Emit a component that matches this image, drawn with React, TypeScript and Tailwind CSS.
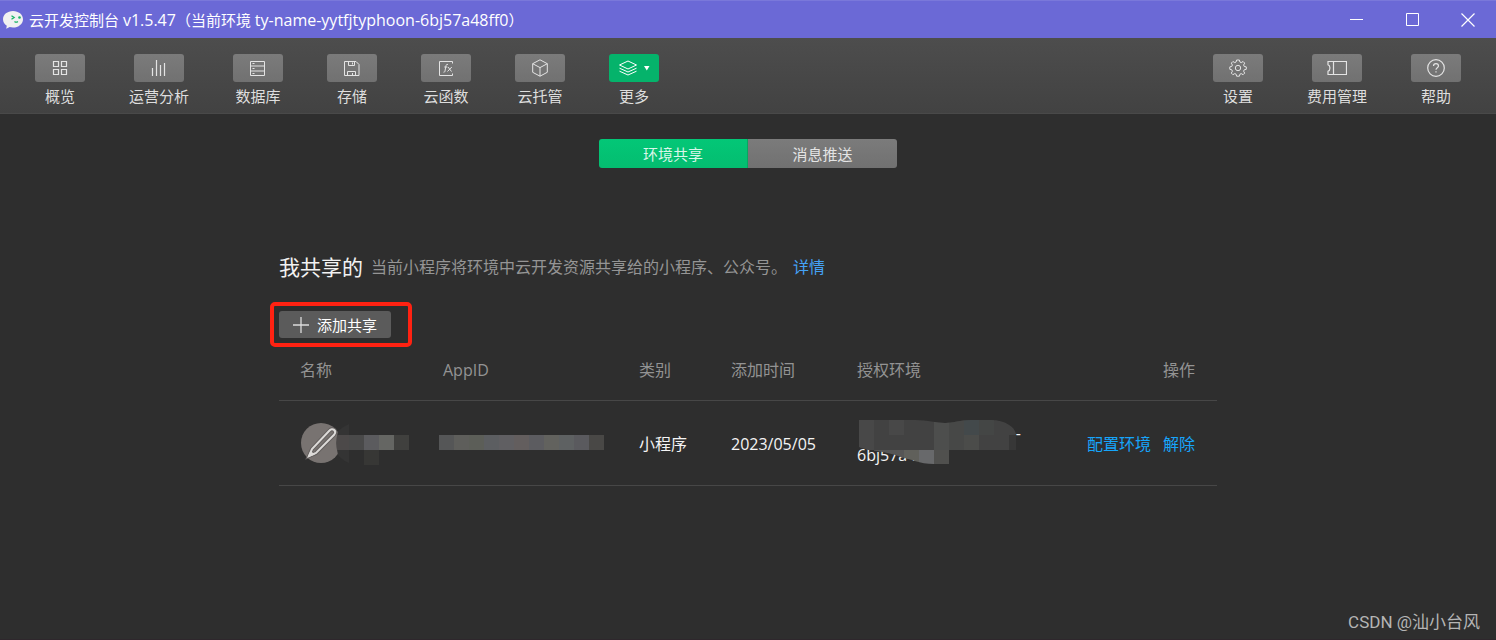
import type { ReactNode } from "react";

type ToolItem = { label: string; icon: ReactNode; active?: boolean };

const stroke = { fill: "none", stroke: "#e4e4e4", strokeWidth: 1 } as const;

const GridIcon = () => (
  <svg width="16" height="16" viewBox="0 0 16 16" {...stroke} aria-hidden="true">
    <path d="M1.5 1.5h5v5h-5zM9.5 1.5h5v5h-5zM1.5 9.5h5v5h-5zM9.5 9.5h5v5h-5z" strokeWidth="1.2" />
  </svg>
);
const BarsIcon = () => (
  <svg width="16" height="16" viewBox="0 0 16 16" {...stroke} aria-hidden="true">
    <path d="M1.5 8v8M5.500 0v16M9.500 5v11M13.500 3v13" strokeWidth="1.2" />
  </svg>
);
const DatabaseIcon = () => (
  <svg width="16" height="16" viewBox="0 0 16 16" {...stroke} aria-hidden="true">
    <path d="M.5 1.5h14v14H.5zM.5 6h14M.5 11h14M2.500 3.500h2M2.500 8.500h2M2.500 13.500h2" />
  </svg>
);
const SaveIcon = () => (
  <svg width="16" height="16" viewBox="0 0 16 16" {...stroke} aria-hidden="true">
    <path d="M.5 1.5h11.500l3 3v11H.5zM4.500 1.500v4h6v-4M8.500 2.500v2M3.500 15.500v-4h8v4M8.500 13v2" />
  </svg>
);
const FunctionIcon = () => (
  <svg width="16" height="16" viewBox="0 0 16 16" {...stroke} aria-hidden="true">
    <path d="M14.500 3.500v-2h-13v14h13v-2" />
    <path d="M10 4.500c-1.500-.5-2 .5-2.200 2L7 11c-.2 1-.7 1.400-1.500 1.200M6.300 7h3M10 7l3.500 4.500M13.800 7l-4.300 4.500" />
  </svg>
);
const CubeIcon = () => (
  <svg width="18" height="18" viewBox="0 0 18 18" {...stroke} strokeLinejoin="round" aria-hidden="true">
    <path d="M9 .8l7.300 3.900v8.600L9 17.200l-7.300-3.900V4.700zM1.700 4.700L9 8.600l7.300-3.900M9 8.600v8.600" />
  </svg>
);
const LayersIcon = () => (
  <svg width="32" height="16" viewBox="0 0 32 16" fill="none" stroke="#fff" aria-hidden="true">
    <path d="M10 1l8.500 4L10 9 1.500 5zM1.500 8.200L10 12l8.500-3.800M1.500 11.200L10 15l8.500-3.800" />
    <path d="M26 6h5.500l-2.700 4.500z" fill="#fff" stroke="none" />
  </svg>
);
const GearIcon = () => (
  <svg width="18" height="18" viewBox="0 0 18 18" {...stroke} strokeLinejoin="round" aria-hidden="true">
    <path d="M7.600 1h2.800l.5 2 1.300.6 1.900-1.100 1.600 1.600-1.100 1.900.6 1.400 2.100.5v2.400l-2.100.5-.6 1.400 1.100 1.900-1.600 1.600-1.900-1.100-1.300.6-.5 2H7.600l-.5-2-1.300-.6-1.900 1.100-1.600-1.600 1.100-1.900-.6-1.400-2-.5V7.900l2-.5.6-1.400-1.100-1.900 1.600-1.600 1.900 1.100 1.300-.6z" />
    <circle cx="9" cy="9" r="2.700" />
  </svg>
);
const TicketIcon = () => (
  <svg width="20" height="16" viewBox="0 0 20 16" {...stroke} aria-hidden="true">
    <path d="M1 1.500h18.500v13H1v-3.200c2.600-.8 2.600-5.800 0-6.600zM6.500 1.500v13" strokeWidth="1.200" />
  </svg>
);
const HelpIcon = () => (
  <svg width="18" height="18" viewBox="0 0 18 18" {...stroke} aria-hidden="true">
    <circle cx="9" cy="9" r="8.300" strokeWidth="1.200" />
    <path d="M6.500 7c0-3.300 5-3.300 5 0 0 1.700-2.500 1.800-2.500 3.800M9 12.200v1.300" strokeWidth="1.200" />
  </svg>
);

const leftItems: ToolItem[] = [
  { label: "概览", icon: <GridIcon /> },
  { label: "运营分析", icon: <BarsIcon /> },
  { label: "数据库", icon: <DatabaseIcon /> },
  { label: "存储", icon: <SaveIcon /> },
  { label: "云函数", icon: <FunctionIcon /> },
  { label: "云托管", icon: <CubeIcon /> },
  { label: "更多", icon: <LayersIcon />, active: true },
];
const rightItems: ToolItem[] = [
  { label: "设置", icon: <GearIcon /> },
  { label: "费用管理", icon: <TicketIcon /> },
  { label: "帮助", icon: <HelpIcon /> },
];

function ToolButton({ label, icon, active }: ToolItem) {
  return (
    <button type="button" className="flex flex-col items-center gap-[3px] text-[15px] leading-[22px] text-[#dedede]">
      <span
        className={
          active
            ? "flex h-7 w-[50px] items-center justify-center rounded-[3px] bg-[#05b36b]"
            : "flex h-7 w-[50px] items-center justify-center rounded-[3px] bg-linear-to-b from-[#7b7b7b] to-[#717171]"
        }
      >
        {icon}
      </span>
      {label}
    </button>
  );
}

function TitleBar() {
  return (
    <header className="flex h-[38px] items-center justify-between border-t border-[#7a78da] bg-[#6b69d6] pl-[3px] text-white">
      <div className="flex items-center gap-[6px]">
        <svg width="20" height="18" viewBox="0 0 20 18" aria-hidden="true">
          <path d="M10 0c5.600 0 10 3.600 10 8.200s-4.400 8.300-10 8.300c-1.200 0-2.300-.2-3.300-.5L3.200 17.800l.6-3C1.500 13.300 0 11 0 8.200 0 3.600 4.400 0 10 0z" fill="#f1f1f1" />
          <path d="M8.500 4.700l2.700 1.800-2.700 1.800M11.500 10.500c1 .8 2.400.8 3.400 0" fill="none" stroke="#18b566" strokeWidth="1.300" />
          <circle cx="16.500" cy="6.500" r="1.300" fill="#18b566" />
        </svg>
        <h1 className="text-[15px] leading-[22px] whitespace-nowrap">
          云开发控制台 <span className="text-base leading-[22px]">v1.5.47</span>（当前环境{" "}
          <span className="text-base leading-[22px]">ty-name-yytfjtyphoon-6bj57a48ff0</span>）
        </h1>
      </div>
      <div className="flex h-full">
        <button type="button" aria-label="最小化" className="flex w-14 items-center justify-center">
          <svg width="13" height="13" viewBox="0 0 13 13" stroke="#fff"><path d="M0 6.500h13" /></svg>
        </button>
        <button type="button" aria-label="最大化" className="flex w-14 items-center justify-center">
          <svg width="13" height="13" viewBox="0 0 13 13" stroke="#fff" fill="none"><path d="M.5.5h12v12H.5z" /></svg>
        </button>
        <button type="button" aria-label="关闭" className="flex w-14 items-center justify-center">
          <svg width="14" height="14" viewBox="0 0 14 14" stroke="#fff" strokeWidth="1.200"><path d="M.5.500l13 13M13.500.5l-13 13" /></svg>
        </button>
      </div>
    </header>
  );
}

const appIdBlocks = ["#555657", "#5e5e5b", "#5c5e58", "#5c5e61", "#605f62", "#635e5e", "#5c5c60", "#62625e", "#5e6162", "#5a5a5e", "#494846"];

function NameCell() {
  return (
    <svg width="108" height="44" viewBox="0 0 108 44" role="img" aria-label="小程序头像">
      <circle cx="20" cy="22" r="20" fill="#787371" />
      <path d="M37 10Q41 6 48 3v39Q41 39 37 34 34 22 37 10z" fill="#343434" />
      <path d="M8 35l3-7L28.500 9.500c3-3.500 7.500.5 4.800 4L15 32z" fill="none" stroke="#625e5d" strokeWidth="4" />
      <path d="M8 35l3-7L28.500 9.500c3-3.500 7.500.5 4.800 4L15 32z" fill="none" stroke="#dcdad8" strokeWidth="2" />
      <path d="M6.500 36.500l3-6.500 4.500 3.500z" fill="#dcdad8" />
      <path d="M36 14h12v15H36q-1-7 0-15z" fill="#4c4949" />
      <path d="M48 14h15v15H48z" fill="#494949" />
      <path d="M63 29h15v15H63z" fill="#373735" />
      <path d="M63 14h15v15H63z" fill="#5b5b5e" />
      <path d="M78 14h15v15H78z" fill="#656663" />
      <path d="M93 14h15v15H93z" fill="#40403e" />
    </svg>
  );
}

function EnvMosaic() {
  return (
    <svg className="absolute top-[-2px] left-0.5" width="158" height="44" viewBox="0 0 158 44" aria-hidden="true">
      <clipPath id="smear">
        <path d="M0 0h56c14 0 20 3 30 3S100 0 112 0h20c14 0 24 7 25 14v16H90v14H75C60 44 52 39 42 37 24 30 12 32 0 27z" />
      </clipPath>
      <g clipPath="url(#smear)">
        <path d="M0 0h158v30H0z" fill="#424242" />
        <path d="M0 0h15v30H0zM30 0h15v15H30z" fill="#484848" />
        <path d="M75 0h15v30H75z" fill="#4d4e4d" />
        <path d="M90 0h15v30H90z" fill="#474847" />
        <path d="M105 0h15v15h-15z" fill="#43494b" />
        <path d="M105 15h15v15h-15z" fill="#4b4c4a" />
        <path d="M120 0h15v15h-15z" fill="#444645" />
        <path d="M150 15h8v15h-8z" fill="#373737" />
        <path d="M15 30h30v14H15z" fill="#565656" />
        <path d="M45 30h15v14H45z" fill="#60605b" />
        <path d="M60 30h15v14H60z" fill="#68696b" />
        <path d="M75 30h15v14H75z" fill="#50504e" />
      </g>
    </svg>
  );
}

export default function App() {
  return (
    <div className="flex min-h-screen flex-col border-b border-[#2e272c] bg-[#2e2e2e] font-['Open_Sans','Noto_Sans_CJK_SC',sans-serif]">
      <TitleBar />
      <nav className="flex justify-between border-b border-[#494949] bg-linear-to-b from-[#4d4d4d] to-[#424242] px-[35px] pt-4 pb-[6px]">
        <div className="flex gap-11">
          {leftItems.map((item) => <ToolButton key={item.label} {...item} />)}
        </div>
        <div className="flex gap-11">
          {rightItems.map((item) => <ToolButton key={item.label} {...item} />)}
        </div>
      </nav>

      <main className="flex grow flex-col items-center pt-[25px]">
        <div role="tablist" className="grid h-[29px] w-[298px] grid-cols-2 overflow-hidden rounded-[3px] text-[15px] leading-[22px]">
          <button type="button" role="tab" aria-selected="true" className="border-r border-[#06a761] bg-linear-to-b from-[#03c777] to-[#04bd70] text-[#d9f6e9]">环境共享</button>
          <button type="button" role="tab" aria-selected="false" className="bg-linear-to-b from-[#7b7b7b] to-[#717171] text-[#e4e4e4]">消息推送</button>
        </div>

        <section className="mt-[84px] w-full max-w-[938px]">
          <div className="flex items-center gap-2 text-base leading-[30px] text-[#959595]">
            <h2 className="text-[21px] leading-[30px] text-[#f2f2f2]">我共享的</h2>
            <p>
              当前小程序将环境中云开发资源共享给的小程序、公众号。
              <a href="#details" className="ml-1.5 text-[#45a2f5]">详情</a>
            </p>
          </div>

          <div className="mt-5 -ml-[9px] flex w-[142px] rounded-[5px] border-4 border-[#ff2212] p-[5px]">
            <button type="button" className="flex h-[27px] w-28 items-center justify-center gap-2 rounded-[3px] bg-[#5b5b5b] text-[15px] leading-[22px] text-white">
              <svg width="16" height="16" viewBox="0 0 16 16" stroke="#dcdcdc" strokeWidth="1.300" aria-hidden="true"><path d="M8 0v16M0 8h16" /></svg>
              添加共享
            </button>
          </div>

          <table className="w-full table-fixed text-left text-base leading-[22px] text-[#f4f4f4]">
            <thead>
              <tr className="h-[53px] border-b border-[#474747] text-[#939393]">
                <th className="w-[143px] pb-1.5 pl-[21px] font-normal">名称</th>
                <th className="w-[196px] pb-1.5 pl-[21px] font-normal">AppID</th>
                <th className="w-[92px] pb-1.5 pl-[21px] font-normal">类别</th>
                <th className="w-[126px] pb-1.5 pl-[21px] font-normal">添加时间</th>
                <th className="w-[205px] pb-1.5 pl-[21px] font-normal">授权环境</th>
                <th className="pr-[22px] pb-1.5 text-right font-normal">操作</th>
              </tr>
            </thead>
            <tbody>
              <tr className="h-[85px] border-b border-[#474747]">
                <td className="pl-[22px]"><NameCell /></td>
                <td className="pl-[17px]">
                  <div className="flex" role="img" aria-label="AppID">
                    {appIdBlocks.map((color, i) => <span key={i} className="size-[15px]" style={{ backgroundColor: color }} />)}
                  </div>
                </td>
                <td className="pt-0.5 pl-[21px]">小程序</td>
                <td className="pt-0.5 pl-[21px]">2023/05/05</td>
                <td className="pt-0.5 pl-[21px]">
                  <div className="relative w-[164px]">
                    <div className="text-right">-</div>
                    <div>6bj57a4</div>
                    <EnvMosaic />
                  </div>
                </td>
                <td className="pt-0.5 pr-[22px] text-right whitespace-nowrap text-[#16a5fb]">
                  <div className="flex justify-end gap-3">
                    <a href="#configure">配置环境</a>
                    <a href="#revoke">解除</a>
                  </div>
                </td>
              </tr>
            </tbody>
          </table>
        </section>

        <footer className="mt-auto flex w-full justify-end pr-4 pb-1 font-['Roboto','Noto_Sans_CJK_SC',sans-serif] text-[17px] leading-[26px] text-[#b5b5b5]">CSDN @汕小台风</footer>
      </main>
    </div>
  );
}
